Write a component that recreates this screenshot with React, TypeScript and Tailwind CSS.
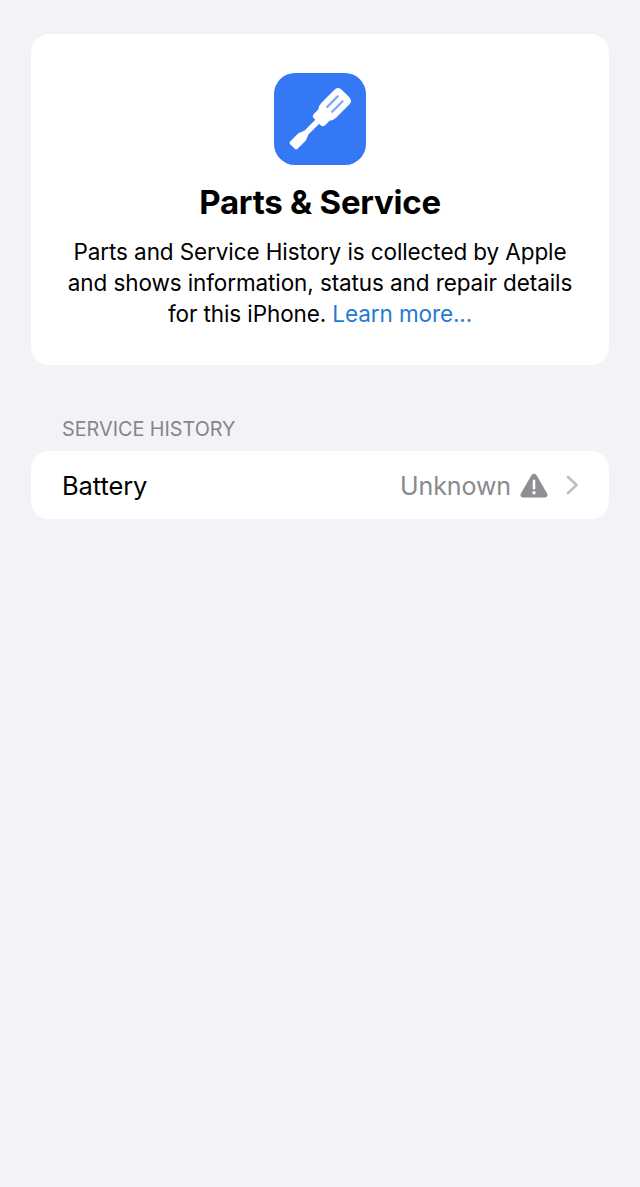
const font = { fontFamily: 'Inter, "Liberation Sans", sans-serif' }

function ScrewdriverIcon() {
    return (
        <div className="flex h-[92px] w-[92px] items-center justify-center rounded-[21px] bg-[#3478f6]">
            <svg width="92" height="92" viewBox="0 0 92 92">
                <g transform="translate(45 47) rotate(45)" fill="#fff">
                    {/* handle */}
                    <path d="M-10.5 -32 Q-10.5 -37.5 -5 -37.5 H5 Q10.5 -37.5 10.5 -32 V-14 Q10.5 -10 8 -7 V-1 Q8 2.5 4.5 2.5 H-4.5 Q-8 2.5 -8 -1 V-7 Q-10.5 -10 -10.5 -14 Z" />
                    {/* shaft */}
                    <rect x="-2.8" y="1" width="5.6" height="19" />
                    {/* blade */}
                    <path d="M-2.8 18 L-5.2 24 V35.5 Q-5.2 37.5 -3.2 37.5 H3.2 Q5.2 37.5 5.2 35.5 V24 L2.8 18 Z" />
                    {/* grooves */}
                    <rect x="-4.6" y="-31" width="2.2" height="17" rx="1.1" fill="#7fa9f7" />
                    <rect x="2.4" y="-31" width="2.2" height="17" rx="1.1" fill="#7fa9f7" />
                </g>
            </svg>
        </div>
    )
}

function WarningIcon() {
    return (
        <svg width="28" height="25" viewBox="0 0 28 25">
            <path
                d="M11.6 2 Q14 -0.6 16.4 2 L27 20.2 Q28.6 24.6 24.6 24.6 H3.4 Q-0.6 24.6 1 20.2 Z"
                fill="#8e8e93"
            />
            <rect x="12.7" y="6.5" width="2.6" height="10" rx="1.3" fill="#fff" />
            <circle cx="14" cy="19.8" r="1.7" fill="#fff" />
        </svg>
    )
}

export default function App() {
    return (
        <div
            className="flex min-h-[1187px] flex-col bg-[#f2f2f7] px-[31px] pt-[34px]"
            style={font}
        >
            <section className="flex h-[331px] flex-col items-center rounded-[18px] bg-white pt-[39px]">
                <ScrewdriverIcon />
                <h1 className="mt-[17px] text-[33px] leading-[40px] font-bold tracking-[-0.25px] text-black">
                    Parts &amp; Service
                </h1>
                <p className="mt-[14px] text-center text-[22.5px] leading-[31px] tracking-[-0.1px] text-black">
                    Parts and Service History is collected by Apple
                    <br />
                    and shows information, status and repair details
                    <br />
                    for this iPhone.{' '}
                    <span className="text-[#1f7ad6]">Learn more...</span>
                </p>
            </section>

            <div className="mt-[51px] px-[31px] text-[19.8px] leading-[26px] text-[#85858b]">
                SERVICE HISTORY
            </div>

            <div className="mt-[9px] flex h-[68px] items-center justify-between rounded-[18px] bg-white px-[31px]">
                <span className="pt-[3px] text-[25.5px] tracking-[-0.1px] text-black">
                    Battery
                </span>
                <div className="flex items-center">
                    <span className="pt-[3px] text-[25px] tracking-[-0.1px] text-[#8a8a8e]">
                        Unknown
                    </span>
                    <span className="ml-[9px]">
                        <WarningIcon />
                    </span>
                    <svg
                        className="mr-[-1px] ml-[18px]"
                        width="13"
                        height="20"
                        viewBox="0 0 13 20"
                        fill="none"
                    >
                        <path
                            d="M2 2 L10.5 10 L2 18"
                            stroke="#c0c0c4"
                            strokeWidth="2.8"
                            strokeLinecap="round"
                            strokeLinejoin="round"
                        />
                    </svg>
                </div>
            </div>
        </div>
    )
}
